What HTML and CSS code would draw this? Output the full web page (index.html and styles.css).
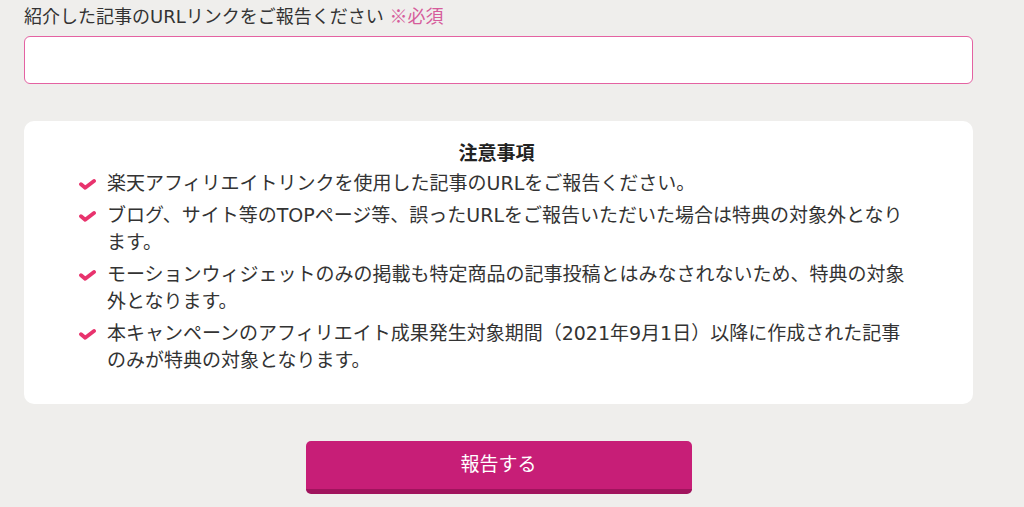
FILE: index.html
```html
<!DOCTYPE html>
<html lang="ja">

<head>
    <meta charset="UTF-8">
    <meta name="viewport" content="width=device-width, initial-scale=1">
    <title>記事URLのご報告</title>
    <link rel="stylesheet" href="styles.css">
</head>

<body>
    <form class="report-form" onsubmit="return false;">
        <label class="field-label" for="article-url">紹介した記事のURLリンクをご報告ください <span class="required">※必須</span></label>
        <input type="url" id="article-url" class="field-input">

        <div class="notes">
            <h2 class="notes-title">注意事項</h2>
            <ul class="notes-list">
                <li>
                    <span class="check"><svg width="17" height="11" viewBox="0 0 17 11"><path d="M2 5.2 L6.2 8.8 L15 2" fill="none" stroke="#e8336d" stroke-width="3.8" stroke-linecap="round" stroke-linejoin="round"/></svg></span>
                    <span>楽天アフィリエイトリンクを使用した記事のURLをご報告ください。</span>
                </li>
                <li>
                    <span class="check"><svg width="17" height="11" viewBox="0 0 17 11"><path d="M2 5.2 L6.2 8.8 L15 2" fill="none" stroke="#e8336d" stroke-width="3.8" stroke-linecap="round" stroke-linejoin="round"/></svg></span>
                    <span>ブログ、サイト等のTOPページ等、誤ったURLをご報告いただいた場合は特典の対象外となります。</span>
                </li>
                <li>
                    <span class="check"><svg width="17" height="11" viewBox="0 0 17 11"><path d="M2 5.2 L6.2 8.8 L15 2" fill="none" stroke="#e8336d" stroke-width="3.8" stroke-linecap="round" stroke-linejoin="round"/></svg></span>
                    <span>モーションウィジェットのみの掲載も特定商品の記事投稿とはみなされないため、特典の対象外となります。</span>
                </li>
                <li>
                    <span class="check"><svg width="17" height="11" viewBox="0 0 17 11"><path d="M2 5.2 L6.2 8.8 L15 2" fill="none" stroke="#e8336d" stroke-width="3.8" stroke-linecap="round" stroke-linejoin="round"/></svg></span>
                    <span>本キャンペーンのアフィリエイト成果発生対象期間（2021年9月1日）以降に作成された記事のみが特典の対象となります。</span>
                </li>
            </ul>
        </div>

        <div class="actions">
            <button type="submit" class="submit-btn">報告する</button>
        </div>
    </form>
</body>

</html>
```

FILE: styles.css
```css
body {
    margin: 0;
    background-color: #efeeec;
    font-family: "DejaVu Sans", "Noto Sans CJK JP", sans-serif;
    color: #333;
}

.report-form {
    width: 949px;
    margin-left: 24px;
    padding-top: 2px;
}

.field-label {
    display: block;
    font-size: 18px;
    line-height: 27px;
    margin-bottom: 6px;
}

.required {
    font-family: "Noto Sans CJK JP", sans-serif;
    color: #d65c9b;
}

.field-input {
    display: block;
    width: 100%;
    height: 48px;
    box-sizing: border-box;
    border: 1.5px solid #e462a2;
    border-radius: 6px;
    background: #fff;
    font-size: 18px;
    padding: 0 12px;
    outline: none;
}

.notes {
    margin-top: 37px;
    background: #fff;
    border-radius: 10px;
    padding: 19px 59px 30px 55px;
}

.notes-title {
    margin: 0 0 3px;
    text-align: center;
    font-size: 19px;
    line-height: 27px;
    font-weight: bold;
    color: #222;
}

.notes-list {
    list-style: none;
    margin: 0;
    padding: 0;
}

.notes-list li {
    display: flex;
    gap: 11px;
    font-size: 19px;
    line-height: 27px;
    margin-bottom: 5px;
}

.notes-list li:last-child {
    margin-bottom: 0;
}

.check {
    flex: 0 0 17px;
    height: 27px;
    display: flex;
    align-items: center;
}

.check svg {
    display: block;
    margin-top: 1px;
}

.actions {
    display: flex;
    justify-content: center;
    margin-top: 37px;
}

.submit-btn {
    width: 386px;
    height: 53px;
    box-sizing: border-box;
    border: none;
    border-bottom: 5px solid #a0145d;
    border-radius: 5px;
    background-color: #c71e77;
    color: #fff;
    font-family: "Noto Sans CJK JP", sans-serif;
    font-size: 19px;
    padding: 0 0 6px;
    cursor: pointer;
}
```
